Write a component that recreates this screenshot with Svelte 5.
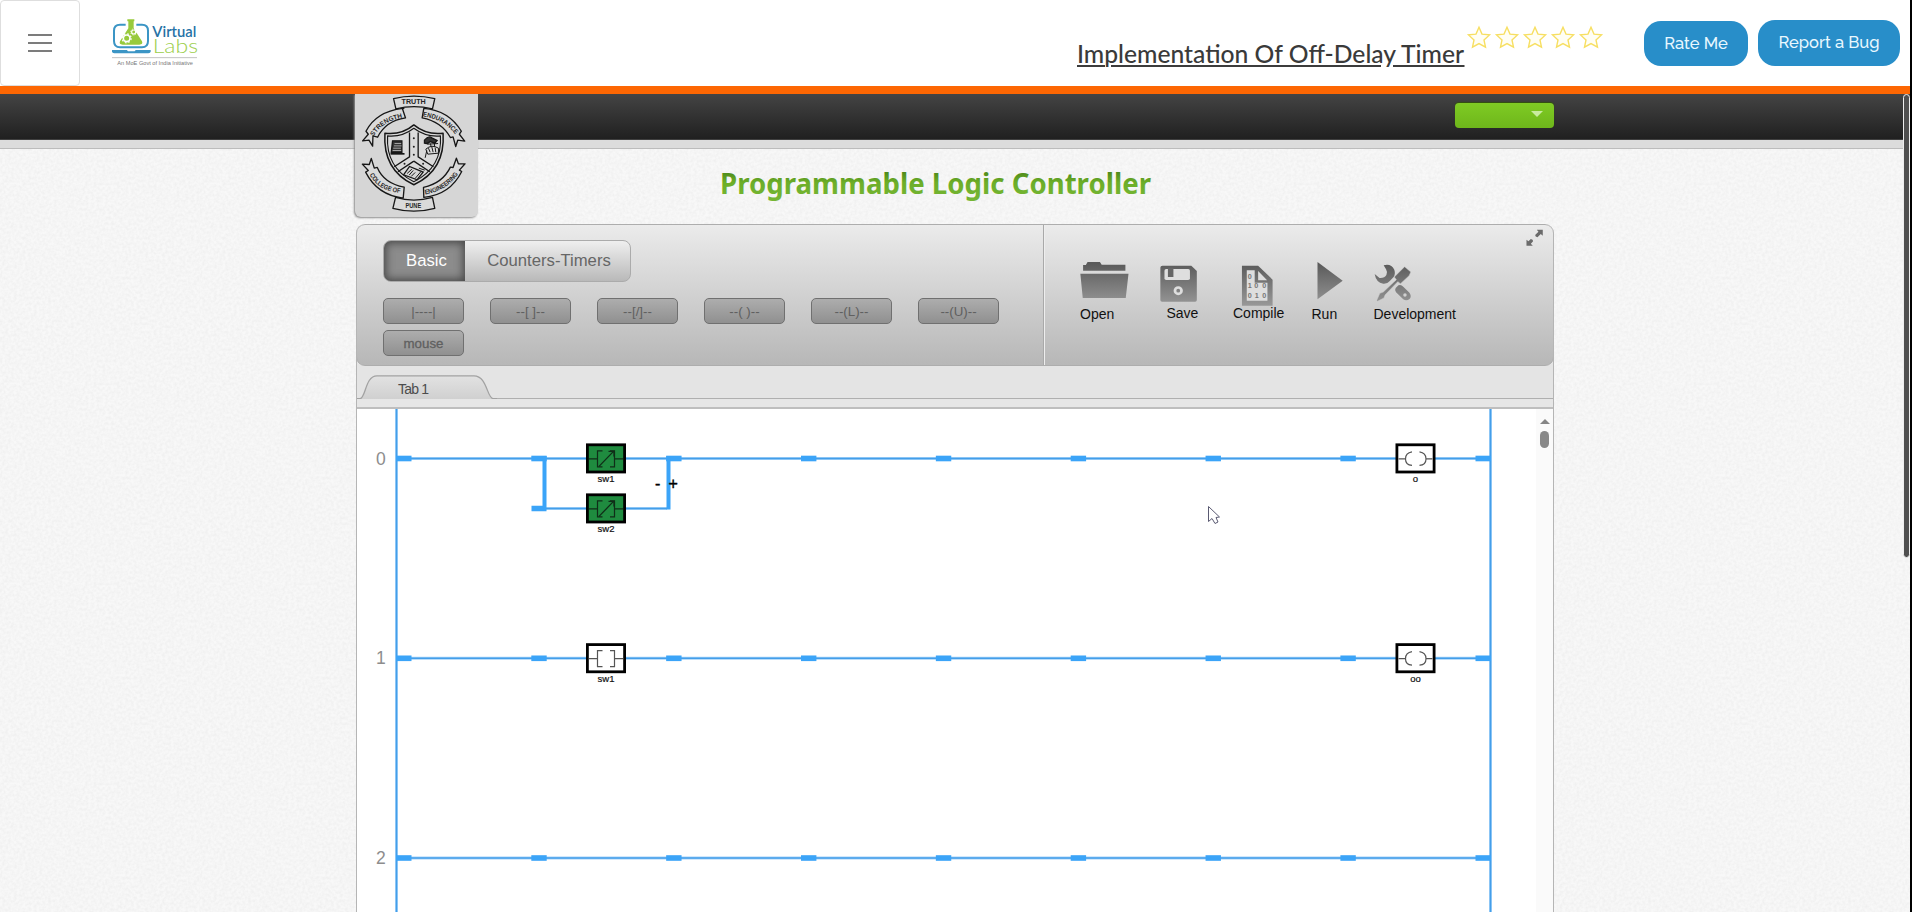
<script>
  const stars = [0, 1, 2, 3, 4];
  const basics = ['|----|', '--[ ]--', '--[/]--', '--( )--', '--(L)--', '--(U)--', 'mouse'];
  const rungs = [49.5, 249.3, 449];
  const knobs = [182, 316.85, 451.7, 586.55, 721.4, 856.25, 991.1];
  const parts = [
    { x: 229, y: 34.4, kind: 'nc', label: 'sw1' },
    { x: 229, y: 84.4, kind: 'nc', label: 'sw2' },
    { x: 1038.5, y: 34.4, kind: 'coil', label: 'o' },
    { x: 229, y: 234.2, kind: 'no', label: 'sw1' },
    { x: 1038.5, y: 234.2, kind: 'coil', label: 'oo' }
  ];
</script>

<div class="page">
  <header>
    <button class="menu" aria-label="Menu"><i></i><i></i><i></i></button>
    <svg class="brand" viewBox="330 50 270 150" width="90" height="50">
      <path d="M377 73h-17q-18 0-18 18v31q0 19 18 19h66q18 0 18-19V91q0-18-18-18h-17" fill="none" stroke="#3b95c5" stroke-width="6" />
      <path d="M336 149h116v4q0 6-7 6H343q-7 0-7-6z" fill="#3b95c5" />
      <path d="M380 148h28l-4 5h-20z" fill="#fff" />
      <path d="M382 57h21v6h-2v21l25 39q4 10-8 10h-50q-12 0-8-10l25-39V63h-3z" fill="#98ca3c" />
      <circle cx="380" cy="114" r="10" fill="none" stroke="#fff" stroke-width="5" />
      <circle cx="380" cy="114" r="13.5" fill="none" stroke="#fff" stroke-width="3.500" stroke-dasharray="5 5.600" />
      <circle cx="401" cy="95" r="6" fill="none" stroke="#fff" stroke-width="3.500" />
      <circle cx="401" cy="95" r="9" fill="none" stroke="#fff" stroke-width="2.500" stroke-dasharray="3.500 3.570" />
      <text x="457" y="109" class="virtual" textLength="132" lengthAdjust="spacingAndGlyphs">Virtual</text>
      <text x="458" y="159" class="labs" textLength="136" lengthAdjust="spacingAndGlyphs">Labs</text>
      <path d="M336 172h255" stroke="#b5b5b5" stroke-width="2.500" />
      <text x="352" y="193" class="moe" textLength="227" lengthAdjust="spacingAndGlyphs">An MoE Govt of India Initiative</text>
    </svg>
    <svg class="exp" width="389" height="40" viewBox="0 0 389 40">
      <text x="0" y="25" textLength="387" lengthAdjust="spacingAndGlyphs">Implementation Of Off-Delay Timer</text>
      <path d="M0 28h28M34 28h270M316 28h71.500" stroke="#3c3c3c" stroke-width="2" />
    </svg>
    <div class="stars">
      {#each stars as s (s)}
        <svg viewBox="0 0 24 23" width="24" height="23"><path d="M12 1.300L15 8.100L22.500 8.900L17 13.900L18.500 21.200L12 17.600L5.500 21.200L7 13.900L1.500 8.900L9 8.100Z" fill="#fffef4" stroke="#f7df62" stroke-width="1.400" /></svg>
      {/each}
    </div>
    <button class="pill rate">Rate Me</button>
    <button class="pill bug">Report a Bug</button>
  </header>

  <div class="topbar">
    <button class="user" aria-label="Account"><span></span></button>
  </div>
  <div class="strip"></div>

  <main>
    <div class="crest">
      <svg viewBox="45 27 370 370" width="123" height="123">
        <defs>
          <path id="arc-a" d="M101 155Q128 108 192 98" />
          <path id="arc-b" d="M249 94Q316 104 350 153" />
          <path id="arc-c" d="M89 270Q116 321 187 325" />
          <path id="arc-d" d="M256 329Q325 318 360 261" />
        </defs>
        <g fill="#dadada" stroke="#171717" stroke-width="4" stroke-linejoin="round">
          <path d="M192 70L188 72L197 99Q137 108 113 157L99 153L98 184L87 166L68 168L85 148L78 139Q108 80 188 70Z" />
          <path d="M252 70Q327 76 365 139L359 148L375 169L354 166L348 185L340 156L332 158Q305 110 247 99Z" />
          <path d="M77 262L85 257L67 238L88 239L94 221L103 250L112 248Q132 296 193 307L190 340Q112 331 77 262Z" />
          <path d="M366 260L359 256L376 237L356 237L350 220L340 248L332 247Q309 295 251 308L252 338Q331 330 366 260Z" />
          <path d="M161 41Q222 26 285 41L278 72Q222 58 168 72Z" />
          <path d="M167 338Q222 354 278 338L285 371Q222 388 159 371Z" />
          <path d="M135 145Q186 151 222 120Q259 151 310 145Q317 256 222 300Q128 256 135 145Z" stroke-width="4.500" />
          <path d="M143 153Q187 157 222 130Q258 157 302 153Q308 248 222 291Q137 248 143 153Z" stroke-width="3.500" />
        </g>
        <g fill="none" stroke="#171717" stroke-width="4">
          <path d="M209 143V216L163 246M235 143V216L281 246M222 229L174 261M222 229L270 261" />
          <path d="M191 270L209 245L250 262L232 285Z" fill="#d5d5d5" />
          <path d="M202 266l14-13M208 271l12-14M214 275l12-12M226 281l17-20M237 250l18 6" stroke-width="3" />
          <path d="M158 168h28v35h-32z" fill="#343434" />
          <path d="M164 176h20M162 183h23M160 190h23M158 197h26" stroke="#bdbdbd" stroke-width="2.500" />
          <path d="M152 207h42" stroke-width="5" />
          <path d="M254 166q12-15 22-7l16 8-7 8-14-5q-7 8-17 5z" fill="#333" />
          <path d="M262 178l33-2M258 193q18-16 38-3v15l-32 3zM266 190l5 12M276 186l4 16M286 188l2 14M261 197l-5 22M272 176l2 10M284 174v10" stroke-width="3" />
        </g>
        <g fill="#222"><circle cx="222" cy="160" r="3" /><circle cx="222" cy="186" r="3" /><circle cx="222" cy="210" r="3" /><circle cx="194" cy="237" r="3" /><circle cx="250" cy="237" r="3" /></g>
        <g class="motto">
          <text x="185" y="57" textLength="73" lengthAdjust="spacingAndGlyphs">TRUTH</text>
          <text x="197" y="370" textLength="47" lengthAdjust="spacingAndGlyphs">PUNE</text>
          <text textLength="107" lengthAdjust="spacingAndGlyphs"><textPath href="#arc-a">STRENGTH</textPath></text>
          <text textLength="115" lengthAdjust="spacingAndGlyphs"><textPath href="#arc-b">ENDURANCE</textPath></text>
          <text textLength="112" lengthAdjust="spacingAndGlyphs"><textPath href="#arc-c">COLLEGE OF</textPath></text>
          <text textLength="120" lengthAdjust="spacingAndGlyphs"><textPath href="#arc-d">ENGINEERING</textPath></text>
        </g>
      </svg>
    </div>
    <svg class="title" width="440" height="50" viewBox="0 0 440 50">
      <defs><linearGradient id="green" x1="0" y1="0" x2="0" y2="1"><stop offset=".2" stop-color="#4a8519" /><stop offset=".5" stop-color="#6cae28" /><stop offset="1" stop-color="#76b636" /></linearGradient></defs>
      <text x="4" y="35" textLength="431" lengthAdjust="spacingAndGlyphs" fill="url(#green)">Programmable Logic Controller</text>
    </svg>

    <section class="panel">
      <div class="toolbar">
        <div class="left">
          <div class="segment"><button class="active">Basic</button><button>Counters-Timers</button></div>
          <div class="basics">
            {#each basics as b (b)}<button class:strong={b === 'mouse'}>{b}</button>{/each}
          </div>
        </div>
        <div class="right">
          <svg width="0" height="0" class="defs"><defs><linearGradient id="ic" gradientUnits="userSpaceOnUse" x1="0" y1="145" x2="0" y2="270"><stop offset="0" stop-color="#5a5a5a" /><stop offset="1" stop-color="#979797" /></linearGradient></defs></svg>
          <div class="tool open">
            <svg viewBox="144 123 150 150" preserveAspectRatio="none" width="51.600" height="50"><path d="M153 167V150h8l5-9h36l5 8h69v18zM145 176h140l-8 73H152z" fill="url(#ic)" /></svg>
            <span>Open</span>
          </div>
          <div class="tool save">
            <svg viewBox="375 123 120 150" preserveAspectRatio="none" width="41.300" height="50">
              <path d="M382 152h84l16 16v87q0 5-5 5h-96q-5 0-5-5v-97q0-6 6-6z" fill="url(#ic)" />
              <rect x="388" y="162" width="74" height="33" rx="5" fill="#dedede" />
              <path d="M398 158h16v28h-16z" fill="#666" />
              <circle cx="428" cy="227" r="9.500" fill="none" stroke="#dedede" stroke-width="8" />
            </svg>
            <span>Save</span>
          </div>
          <div class="tool compile">
            <svg viewBox="588 123 126 150" preserveAspectRatio="none" width="43.400" height="50">
              <path d="M614 152h47l42 42v78h-89z" fill="url(#ic)" />
              <path d="M628 166h23v37h37v54h-60zM661 168v28h26z" fill="#dedede" />
              <g class="bits"><text x="631" y="191">0</text><text x="631" y="220">1</text><text x="650" y="220">0</text><text x="673" y="220">0</text><text x="631" y="249">0</text><text x="651" y="249">1</text><text x="673" y="249">0</text></g>
            </svg>
            <span>Compile</span>
          </div>
          <div class="tool run">
            <svg viewBox="816 123 105 150" preserveAspectRatio="none" width="36.200" height="50"><path d="M832 141l73 56-73 56z" fill="url(#ic)" /></svg>
            <span>Run</span>
          </div>
          <div class="tool dev">
            <svg viewBox="996 123 120 150" preserveAspectRatio="none" width="41.300" height="50">
              <path d="M1024 151q22-6 31 13 4 12-2 22l-11 12q-7 9-19 8-21-3-25-29l14 12q15 1 20-9 4-9-1-17zM1067 211q8-3 14 4l18 18q7 10 1 18-9 8-19 2l-21-21q-5-7-1-13z" fill="url(#ic)" />
              <circle cx="1086" cy="240" r="5" fill="#d0d0d0" />
              <path d="M1085 155l18 16-5 11-25 24-8-6-37 40-3 9-19 10-2-3 9-21 10-4 38-37-6-8z" fill="url(#ic)" stroke="#cdcdcd" stroke-width="1.500" />
            </svg>
            <span>Development</span>
          </div>
          <svg class="expand" viewBox="1442 43 52 52" width="17.600" height="17.300"><path d="M1474 45h18v18l-6-5-10 10q-7-1-7-7l10-10zM1443 93V75l6 5 7-7q7 1 7 7l-7 7 6 6z" fill="#6b6b6b" /></svg>
        </div>
      </div>

      <div class="tabs">
        <svg width="140" height="34" viewBox="0 0 140 34">
          <defs><linearGradient id="tab" x1="0" y1="0" x2="0" y2="1"><stop offset="0" stop-color="#e2e2e2" /><stop offset="1" stop-color="#d0d0d0" /></linearGradient></defs>
          <path d="M0 33H3C9 32 8 9.800 20 9.800H117C130 9.800 130 32 136 33z" fill="url(#tab)" />
          <path d="M0 32.700H3C9 32 8 9.800 20 9.800H117C130 9.800 130 32 136 32.700H140" fill="none" stroke="#a2a2a2" stroke-width="1.300" />
          <text x="41" y="28" textLength="31">Tab 1</text>
        </svg>
      </div>
      <div class="gap"></div>

      <div class="ladder">
        <svg width="1179" height="503" viewBox="0 0 1179 503">
          <g stroke="#a3d2f9" stroke-width="3"><path d="M39.500 0V503M1133.500 0V503" />
            {#each rungs as y (y)}<path d="M40 {y}H1133" />{/each}
            <path d="M189 99.500H310" />
          </g>
          <g stroke="#449ee9" stroke-width="1.500"><path d="M39.500 0V503M1133.500 0V503" />
            {#each rungs as y (y)}<path d="M40 {y}H1133" />{/each}
            <path d="M189 99.500H310" />
          </g>
          <g fill="#3ba4f8">
            {#each rungs as y, i (y)}
              <rect x="39" y={y - 2.8} width="15.500" height="5.600" /><rect x="1118.500" y={y - 2.8} width="15.500" height="5.600" /><text class="num" x="19" y={y + 6}>{i}</text>
              {#each knobs as kx (kx)}
                <rect x={kx - 7.7} y={y - 2.8} width="15.400" height="5.600" />
              {/each}
            {/each}
            <path d="M185.500 47h4v55.300h-15v-5.600h11zM309.500 47h4v53.500h-4z" />
          </g>
          {#each parts as p, i (i)}
            <g transform="translate({p.x} {p.y})">
              <rect x="1.400" y="1.400" width="37.200" height="27.200" fill={p.kind === 'nc' ? '#1f8b3f' : '#fff'} stroke="#000" stroke-width="2.800" />
              {#if p.kind === 'coil'}
                <path d="M3 15.500H10M30 15.500H37M16.500 8.500Q10 9.500 10 15.500T16.500 22M24 8.500Q30.500 9.500 30.500 15.500T24 22" fill="none" stroke="#555" stroke-width="1.200" />
              {:else}
                <path d="M3 15.500H11.500M28.500 15.500H37M16.500 7.500H11.500V23.500H16.500M24 7.500H28.500V23.500H24" fill="none" stroke={p.kind === 'nc' ? '#102d18' : '#555'} stroke-width="1.200" />
                {#if p.kind === 'nc'}<path d="M13 23L27.500 8M22.500 8H28V13" fill="none" stroke="#102d18" stroke-width="1.300" />{/if}
              {/if}
              <text class="name" x="20" y="38.800">{p.label}</text>
            </g>
          {/each}
          <text class="sign" x="298" y="80">-</text>
          <text class="sign" x="311.500" y="79.500">+</text>
          <path d="M851.500 97.500V112.500L855 109.500L858 114.500L861 113L859 108.500L862.500 108Z" fill="#fff" stroke="#5a5a72" stroke-width="1" />
        </svg>
        <div class="scroll"><span class="up"></span><span class="thumb"></span></div>
      </div>
    </section>
  </main>
  <div class="pagescroll"></div>
  <div class="edge"></div>
</div>

<style>
  :global(body) { margin: 0; overflow: hidden; }
  .page { position: relative; width: 1912px; height: 912px; overflow: hidden; display: flex; flex-direction: column; font-family: 'Liberation Sans', Arial, sans-serif; background-color: #f8f8f8; background-image: url("data:image/svg+xml,%3Csvg xmlns='http://www.w3.org/2000/svg' width='200' height='200'%3E%3Cfilter id='n'%3E%3CfeTurbulence type='fractalNoise' baseFrequency='.35' numOctaves='2' stitchTiles='stitch'/%3E%3CfeColorMatrix values='0 0 0 0 0 0 0 0 0 0 0 0 0 0 0 .06 0 0 0 -.018'/%3E%3C/filter%3E%3Crect width='200' height='200' filter='url(%23n)'/%3E%3C/svg%3E"); }
  button { border: 0; padding: 0; margin: 0; font: inherit; box-sizing: border-box; }
  svg { display: block; flex: none; overflow: visible; }
  header { height: 86px; flex: none; display: flex; align-items: flex-start; background: #fff; }
  .menu { width: 80px; height: 86px; border: 1px solid #dedede; border-radius: 4px; background: #fff; display: flex; flex-direction: column; align-items: center; justify-content: center; gap: 6px; }
  .menu i { width: 24px; height: 2px; background: #7c7c7c; }
  .brand { margin: 17px 0 0 30px; }
  .virtual { font: 600 48px Lato, sans-serif; fill: #2672a6; }
  .labs { font: 300 56px Lato, sans-serif; fill: #9bce49; }
  .moe { font: 15px 'Liberation Sans', sans-serif; fill: #777; }
  .exp { margin: 38px 0 0 877px; }
  .exp text { font: 500 25px Lato, sans-serif; fill: #3a3a3a; }
  .stars { display: flex; gap: 4px; margin: 26px 0 0 1px; }
  .pill { background: #288ec9; color: #e9f8ff; border-radius: 17px; font: 500 16.500px Raleway, Lato, sans-serif; }
  .rate { margin: 21px 0 0 41px; width: 104px; height: 45px; padding-bottom: 2px; }
  .bug { margin: 20px 0 0 10px; width: 142px; height: 46px; padding-bottom: 2px; }
  .topbar { height: 46px; flex: none; box-sizing: border-box; border-bottom: 1px solid #3f3f3f; background: linear-gradient(#444, #202020); padding-left: 1454.500px; margin-top: 8px; box-shadow: 0 -8px #fd6703; }
  .user { display: flex; justify-content: flex-end; margin-top: 9px; width: 99.500px; height: 25px; border-radius: 4px; background: linear-gradient(#7fcb24, #6eb61b); box-shadow: 0 -1px 1px #33510f; }
  .user span { border: 6px solid transparent; border-top-color: #c8eb9f; border-bottom: 0; margin: 8px 11px 0 0; align-self: flex-start; }
  .strip { height: 9px; flex: none; box-sizing: border-box; background: #dcdcdc; border-bottom: 1px solid #bcbcbc; }
  main { width: 1200px; margin: 0 0 0 355px; display: grid; grid-template-columns: 361px 1fr; grid-template-rows: 75px 688px; }
  .crest { width: 123px; height: 123px; margin-top: -55px; background: #d6d6d6; border-radius: 0 0 6px 6px; box-shadow: -1px 1px 2px #8d8d8d; position: relative; }
  .motto { font: 700 20px 'Liberation Sans', sans-serif; fill: #262626; }
  .title { margin-top: 10px; }
  .title text { font: 700 29px 'Noto Sans', sans-serif; }
  .panel { grid-column: 1 / 3; margin-left: 1px; width: 1198px; box-sizing: border-box; border: 0 solid #b5b5b5; border-width: 0 1px 0 1px; background: #e4e4e4; border-radius: 9px 9px 0 0; display: flex; flex-direction: column; overflow: hidden; }
  .toolbar { height: 142px; flex: none; box-sizing: border-box; margin: 0 -1px; border: 1px solid #adadad; border-radius: 9px; background: linear-gradient(#ebebeb, #b7b7b7); display: flex; }
  .left { width: 687px; box-sizing: border-box; padding: 15px 0 0 26px; border-right: 1px solid #a9a9a9; }
  .segment { display: flex; width: 248px; height: 42px; box-sizing: border-box; border: 1px solid #ababab; border-radius: 8px; background: linear-gradient(#efefef, #b9b9b9); overflow: hidden; }
  .segment button { background: none; color: #666; font-size: 16.700px; width: 165px; padding-bottom: 1px; padding-left: 3px; white-space: nowrap; }
  .segment .active { width: 81px; padding-left: 4px; background: #8c8c8c; color: #fff; box-shadow: inset 0 0 9px 2px #484848; }
  .basics { display: grid; grid-template-columns: repeat(6, 107px); row-gap: 6px; margin-top: 16px; }
  .basics button { width: 81px; height: 26px; border: 1px solid #707070; border-radius: 5px; background: linear-gradient(#adadad, #909090); color: #606060; font-size: 13.300px; }
  .basics .strong { font-size: 13.300px; -webkit-text-stroke: .3px #606060; }
  .right { flex: 1; display: flex; position: relative; padding: 31px 0 0 35px; border-left: 1px solid #eee; }
  .defs { position: absolute; }
  .tool { font-size: 14px; line-height: 16px; color: #111; flex: none; }
  .tool span { display: block; white-space: nowrap; }
  .open { width: 79.500px; }
  .save { width: 73.500px; }
  .save span { margin: -1px 0 0 7px; }
  .compile { width: 78.500px; }
  .compile span { margin-top: -1px; }
  .run { width: 62px; }
  .bits { font: 700 21px 'Liberation Sans', sans-serif; fill: #777; }
  .expand { position: absolute; right: 9px; top: 4px; }
  .tabs { height: 33px; flex: none; box-sizing: border-box; border-bottom: 1px solid #afafaf; }
  .tabs text { font: 500 14px 'Liberation Sans', sans-serif; fill: #4c4c4c; }
  .gap { height: 10px; flex: none; box-sizing: border-box; background: #e6e6e6; border-bottom: 2px solid #bebebe; }
  .ladder { flex: 1; display: flex; background: #fff; }
  .scroll { flex: 1; background: #fafafa; display: flex; flex-direction: column; align-items: center; padding-top: 10px; }
  .up { border: 5px solid transparent; border-bottom-color: #858585; border-top: 0; }
  .thumb { width: 9px; height: 17px; margin-top: 7px; border-radius: 5px; background: #888; }
  .num { font: 17.500px 'Liberation Sans', sans-serif; fill: #8d8d8d; }
  .name { font: 9.500px 'Liberation Sans', sans-serif; fill: #111; text-anchor: middle; stroke: #111; stroke-width: .2px; }
  .sign { font: 16px 'Liberation Sans', sans-serif; fill: #000; stroke: #000; stroke-width: .4px; }
  .pagescroll { position: absolute; left: 1903px; top: 94px; width: 7px; height: 464px; box-sizing: border-box; border: 1px solid #eee; border-radius: 4px; background: #505050; }
  .edge { position: absolute; right: 0; top: 0; width: 2px; height: 912px; background: #000; }
</style>
